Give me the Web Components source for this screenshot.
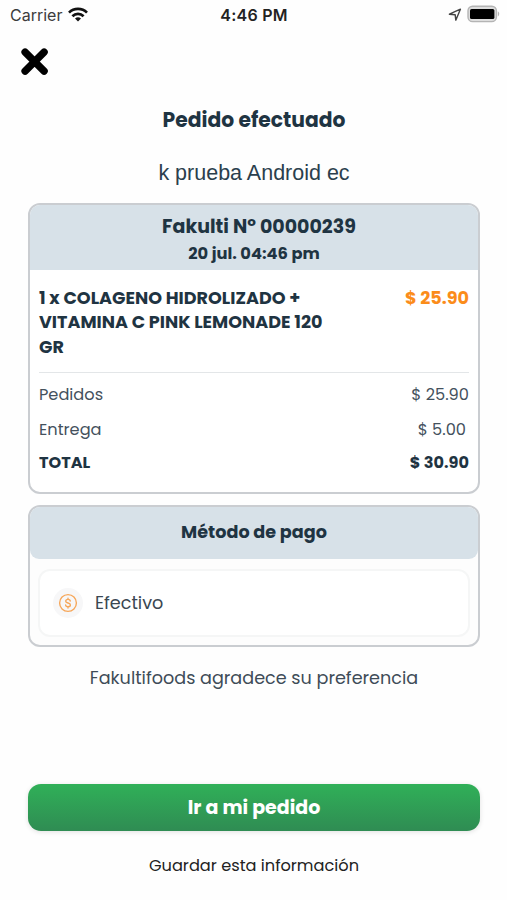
<!DOCTYPE html>
<html lang="es">
<head>
<meta charset="utf-8">
<meta name="viewport" content="width=device-width, initial-scale=1">
<title>Pedido efectuado</title>
<style>
body {
  margin: 0;
  background: #fefefe;
  color: #1f3442;
  font-family: Poppins, Inter, "Open Sans", sans-serif;
  font-feature-settings: "cv11";
}
</style>
</head>
<body>
<order-screen>
  <status-bar slot="status" carrier="Carrier" time="4:46 PM"></status-bar>
  <close-button slot="nav"></close-button>
  <span slot="title">Pedido efectuado</span>
  <span slot="customer">k prueba Android ec</span>

  <order-card>
    <span slot="number">Fakulti Nº 00000239</span>
    <span slot="date">20 jul. 04:46 pm</span>
    <order-item price="$ 25.90">1 x COLAGENO HIDROLIZADO + VITAMINA C PINK LEMONADE 120 GR</order-item>
    <summary-row amount="$ 25.90">Pedidos</summary-row>
    <summary-row amount="$ 5.00" inset>Entrega</summary-row>
    <summary-row amount="$ 30.90" total>TOTAL</summary-row>
  </order-card>

  <payment-card>
    <span slot="heading">Método de pago</span>
    <payment-option>Efectivo</payment-option>
  </payment-card>

  <span slot="thanks">Fakultifoods agradece su preferencia</span>
  <primary-button slot="action">Ir a mi pedido</primary-button>
  <span slot="link">Guardar esta información</span>
</order-screen>

<script>
// Base class: clones the static template of the subclass into a shadow root.
class BaseElement extends HTMLElement {
  constructor() {
    super();
    this.attachShadow({mode: "open"});
    let template = document.createElement("template");
    template.innerHTML = this.constructor.markup;
    this.shadowRoot.append(template.content.cloneNode(true));
  }

  // Copies an attribute of the host into an element of the shadow tree.
  fill(selector, name) {
    this.shadowRoot.querySelector(selector).textContent = this.getAttribute(name) || "";
  }
}

class OrderScreen extends BaseElement {}
OrderScreen.markup = `
<style>
:host {
  display: flex;
  flex-direction: column;
  box-sizing: border-box;
  width: 100%;
  min-height: 900px;
}
main {
  display: flex;
  flex-direction: column;
  padding: 0 27px 0 28px;
  text-align: center;
}
h1 {
  margin: 14px 0 0;
  font-size: 20.3px;
  font-weight: 700;
  line-height: 26px;
}
.customer {
  margin: 27px 0 17px;
  font: 21.5px/26px "Liberation Sans", Arial, sans-serif;
  color: #2b3f4d;
}
.cards {
  display: flex;
  flex-direction: column;
  gap: 11px;
}
.thanks {
  margin: 18px 0 93px;
  font-size: 17.6px;
  line-height: 26px;
  color: #3f4c58;
}
.link {
  margin: 22px 0 0;
  font-size: 16.2px;
  line-height: 25px;
  color: #222;
}
</style>
<slot name="status"></slot>
<slot name="nav"></slot>
<main>
  <h1><slot name="title"></slot></h1>
  <p class="customer"><slot name="customer"></slot></p>
  <div class="cards"><slot></slot></div>
  <p class="thanks"><slot name="thanks"></slot></p>
  <slot name="action"></slot>
  <p class="link"><slot name="link"></slot></p>
</main>
`;

class StatusBar extends BaseElement {
  connectedCallback() {
    this.fill(".carrier", "carrier");
    this.fill(".time", "time");
  }
}
StatusBar.markup = `
<style>
:host {
  display: grid;
  grid-template-columns: 1fr auto 1fr;
  align-items: center;
  height: 30px;
  padding: 0 7px 0 10px;
  font-family: Inter, "Liberation Sans", sans-serif;
  font-feature-settings: normal;
  font-size: 16px;
}
.left, .right { display: flex; align-items: center; }
.left { gap: 6px; }
.right { justify-content: flex-end; gap: 5px; }
.carrier { color: #3c3c3c; }
.time { margin-right: 2px; color: #222; font-weight: 600; letter-spacing: .25px; }
svg { display: block; }
.right svg { margin-top: -2px; }
</style>
<div class="left">
  <span class="carrier"></span>
  <svg width="20" height="16" viewBox="0 0 20 16" fill="none" stroke="#111" stroke-width="2.7">
    <path d="M1 5.6a12.8 12.8 0 0 1 18 0"/>
    <path d="M4.4 9.2a8 8 0 0 1 11.2 0"/>
    <path d="M10 14.6 7 11.6a4.3 4.3 0 0 1 6 0z" fill="#111" stroke="none"/>
  </svg>
</div>
<span class="time"></span>
<div class="right">
  <svg width="14" height="14" viewBox="0 0 14 14" fill="none" stroke="#444" stroke-width="1.4" stroke-linejoin="round">
    <path d="M1.4 7.2 12.4 2.2 7.8 13.2 7.2 7.8z"/>
  </svg>
  <svg width="33" height="18" viewBox="0 0 33 18">
    <rect x="1" y="1.2" width="28.4" height="15.4" rx="4.6" fill="#ddd" stroke="#b4b4b4" stroke-width="1.4"/>
    <rect x="3" y="4" width="24.4" height="10" rx="1.6" fill="#000"/>
    <path d="M30.8 6.6c1.9.6 1.9 4 0 4.8z" fill="#b4b4b4"/>
  </svg>
</div>
`;

class CloseButton extends BaseElement {}
CloseButton.markup = `
<style>
:host {
  display: flex;
  align-items: center;
  height: 63px;
  padding-left: 20px;
}
button {
  padding: 0;
  border: 0;
  background: none;
}
svg { display: block; }
</style>
<button aria-label="Cerrar">
  <svg width="29" height="29" viewBox="0 0 29 29" stroke="#000" stroke-width="7.4" stroke-linecap="round">
    <path d="M5.1 5.1 24.1 24.1M24.1 5.1 5.1 24.1"/>
  </svg>
</button>
`;

class OrderCard extends BaseElement {}
OrderCard.markup = `
<style>
:host {
  display: block;
  box-sizing: border-box;
  height: 291px;
  border: 2px solid #cacdd1;
  border-radius: 12px;
  overflow: hidden;
  background: #fff;
}
header {
  box-sizing: border-box;
  height: 65px;
  padding-top: 9px;
  background: #d7e1e8;
  font-weight: 700;
}
.number { padding-left: 10px; font-size: 19px; line-height: 26px; }
.date { font-size: 16.3px; line-height: 27px; }
.body { padding: 0 9px; }
</style>
<header>
  <div class="number"><slot name="number"></slot></div>
  <div class="date"><slot name="date"></slot></div>
</header>
<div class="body"><slot></slot></div>
`;

class OrderItem extends BaseElement {
  connectedCallback() {
    this.fill(".price", "price");
  }
}
OrderItem.markup = `
<style>
:host {
  display: flex;
  justify-content: space-between;
  margin-bottom: 4px;
  padding: 16px 0 13px;
  border-bottom: 1px solid #e3e6e8;
  font-size: 17.6px;
  font-weight: 700;
  line-height: 24.3px;
  text-align: left;
}
.name { width: 300px; }
.price { color: #fb8c1a; }
</style>
<div class="name"><slot></slot></div>
<div class="price"></div>
`;

class SummaryRow extends BaseElement {
  connectedCallback() {
    this.fill(".amount", "amount");
  }
}
SummaryRow.markup = `
<style>
:host {
  display: flex;
  justify-content: space-between;
  font-size: 16.2px;
  line-height: 35px;
  color: #44515d;
}
:host([inset]) .amount { padding-right: 3px; }
:host([total]) {
  color: #1f3442;
  font-weight: 700;
  font-size: 16.1px;
  line-height: 31px;
}
</style>
<span><slot></slot></span>
<span class="amount"></span>
`;

class PaymentCard extends BaseElement {}
PaymentCard.markup = `
<style>
:host {
  display: block;
  box-sizing: border-box;
  border: 2px solid #cacdd1;
  border-radius: 12px;
  overflow: hidden;
  background: #fdfdfd;
}
header {
  padding-bottom: 2px;
  border-radius: 0 0 9px 9px;
  background: #d7e1e8;
  font-size: 17.6px;
  font-weight: 700;
  line-height: 50px;
}
.options { padding: 10px 8px 8px; }
</style>
<header><slot name="heading"></slot></header>
<div class="options"><slot></slot></div>
`;

class PaymentOption extends BaseElement {}
PaymentOption.markup = `
<style>
:host {
  display: flex;
  align-items: center;
  gap: 12px;
  box-sizing: border-box;
  height: 68px;
  padding: 0 13px;
  border: 2px solid #f5f6f6;
  border-radius: 12px;
  background: #fff;
  font-size: 17.6px;
  color: #3a4752;
}
.icon {
  display: grid;
  place-items: center;
  width: 30px;
  height: 30px;
  border-radius: 50%;
  background: #f7f7f8;
}
</style>
<div class="icon">
  <svg width="20" height="20" viewBox="0 0 20 20" fill="none" stroke="#f6a85c" stroke-width="1.4" stroke-linecap="round">
    <circle cx="10" cy="10" r="8.4"/>
    <path d="M12.3 8c-.2-1-1.1-1.6-2.3-1.6-1.3 0-2.3.7-2.3 1.8 0 2.5 4.7 1.1 4.7 3.7 0 1.1-1 1.8-2.4 1.8s-2.3-.7-2.4-1.7M10 5.1v1.3M10 13.7V15"/>
  </svg>
</div>
<span><slot></slot></span>
`;

class PrimaryButton extends BaseElement {}
PrimaryButton.markup = `
<style>
:host { display: block; }
button {
  display: block;
  width: 100%;
  height: 47px;
  padding: 0;
  border: 0;
  border-radius: 13px;
  background: linear-gradient(#30b058, #2f8c53);
  box-shadow: 0 1px 5px rgba(0, 0, 0, .12);
  color: #fff;
  font: inherit;
  font-size: 19px;
  font-weight: 700;
}
</style>
<button><slot></slot></button>
`;

customElements.define("order-screen", OrderScreen);
customElements.define("status-bar", StatusBar);
customElements.define("close-button", CloseButton);
customElements.define("order-card", OrderCard);
customElements.define("order-item", OrderItem);
customElements.define("summary-row", SummaryRow);
customElements.define("payment-card", PaymentCard);
customElements.define("payment-option", PaymentOption);
customElements.define("primary-button", PrimaryButton);
</script>
</body>
</html>
